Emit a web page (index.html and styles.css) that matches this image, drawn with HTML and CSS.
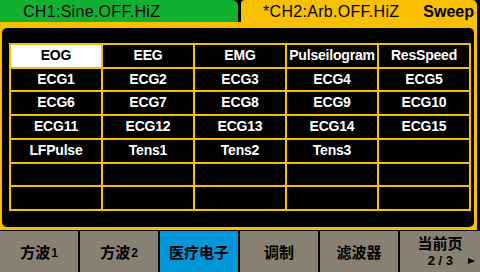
FILE: index.html
```html
<!DOCTYPE html>
<html lang="en">
<head>
  <meta charset="UTF-8">
  <title>Arb Medical</title>
  <link rel="stylesheet" href="styles.css">
</head>
<body>
  <div class="screen">
    <!-- Channel tabs -->
    <div class="tabs">
      <div class="tab tab-ch1">CH1:Sine.OFF.HiZ</div>
      <div class="tab tab-ch2">
        <span>*CH2:Arb.OFF.HiZ</span>
        <span class="mode">Sweep</span>
      </div>
    </div>

    <!-- Waveform list -->
    <div class="frame">
      <div class="panel">
        <div class="wave-grid">
          <div class="cell selected">EOG</div>
          <div class="cell">EEG</div>
          <div class="cell">EMG</div>
          <div class="cell">Pulseilogram</div>
          <div class="cell">ResSpeed</div>
          <div class="cell">ECG1</div>
          <div class="cell">ECG2</div>
          <div class="cell">ECG3</div>
          <div class="cell">ECG4</div>
          <div class="cell">ECG5</div>
          <div class="cell">ECG6</div>
          <div class="cell">ECG7</div>
          <div class="cell">ECG8</div>
          <div class="cell">ECG9</div>
          <div class="cell">ECG10</div>
          <div class="cell">ECG11</div>
          <div class="cell">ECG12</div>
          <div class="cell">ECG13</div>
          <div class="cell">ECG14</div>
          <div class="cell">ECG15</div>
          <div class="cell">LFPulse</div>
          <div class="cell">Tens1</div>
          <div class="cell">Tens2</div>
          <div class="cell">Tens3</div>
          <div class="cell"></div>
          <div class="cell"></div>
          <div class="cell"></div>
          <div class="cell"></div>
          <div class="cell"></div>
          <div class="cell"></div>
          <div class="cell"></div>
          <div class="cell"></div>
          <div class="cell"></div>
          <div class="cell"></div>
          <div class="cell"></div>
        </div>
      </div>
    </div>

    <!-- Soft keys -->
    <div class="softkeys">
      <div class="key">方波<span class="num">1</span></div>
      <div class="key">方波<span class="num">2</span></div>
      <div class="key active">医疗电子</div>
      <div class="key">调制</div>
      <div class="key">滤波器</div>
      <div class="key page">
        <div>当前页</div>
        <div class="page-num">2 / 3<span class="arrow"></span></div>
      </div>
    </div>
  </div>
</body>
</html>
```

FILE: styles.css
```css
body {
  margin: 0;
  background: #000;
  font-family: "Liberation Sans", Arial, sans-serif;
}

.screen {
  width: 480px;
  height: 272px;
  background: #000;
  overflow: hidden;
}

.tabs {
  display: flex;
  height: 22px;
}

.tab {
  height: 22px;
  line-height: 23px;
  font-size: 16px;
  letter-spacing: 0.3px;
  color: #000;
  box-sizing: border-box;
  white-space: nowrap;
}

.tab-ch1 {
  width: 238px;
  background: #10b030;
  border-radius: 0 6px 0 0;
  padding-left: 23px;
}

.tab-ch2 {
  width: 236px;
  margin-left: 3px;
  background: #f8c000;
  border-radius: 4px 5px 0 0;
  padding: 0 3px 0 22px;
  display: flex;
  justify-content: space-between;
}

.mode {
  font-weight: bold;
  letter-spacing: 0;
}

.frame {
  width: 477px;
  height: 208px;
  box-sizing: border-box;
  background: #f8c000;
  padding: 6px 3px 3px 2px;
}

.panel {
  height: 100%;
  background: #000;
  border-radius: 5px;
  box-sizing: border-box;
  padding: 15px 0 0 7px;
}

.wave-grid {
  width: 462px;
  height: 168px;
  box-sizing: border-box;
  display: grid;
  grid-template-columns: repeat(5, 1fr);
  grid-template-rows: repeat(7, 1fr);
  gap: 2px;
  padding: 2px;
  background: #f8c000;
}

.cell {
  background: #000;
  color: #fff;
  font-size: 14px;
  font-weight: bold;
  letter-spacing: -0.2px;
  display: flex;
  align-items: center;
  justify-content: center;
  padding-bottom: 2px;
}

.cell.selected {
  background: #fff;
  color: #000;
}

.softkeys {
  display: flex;
  gap: 2px;
  height: 41px;
  margin-top: 1px;
}

.key {
  width: 78px;
  background: #878073;
  color: #000;
  font-family: "Noto Sans CJK SC", sans-serif;
  font-weight: bold;
  font-size: 15px;
  display: flex;
  align-items: center;
  justify-content: center;
}

.key .num {
  font-family: "Liberation Sans", sans-serif;
  font-size: 12px;
  margin-left: 1px;
  padding-top: 2px;
}

.key.active {
  background: #0096d8;
}

.key.page {
  flex: 1;
  flex-direction: column;
  line-height: 18px;
}

.page-num {
  font-family: "Liberation Sans", sans-serif;
  font-size: 13px;
  width: 100%;
  box-sizing: border-box;
  padding-right: 5px;
  display: flex;
  align-items: center;
  justify-content: flex-end;
}

.arrow {
  width: 0;
  height: 0;
  margin-left: 15px;
  border-left: 7px solid #000;
  border-top: 3px solid transparent;
  border-bottom: 3px solid transparent;
}
```
